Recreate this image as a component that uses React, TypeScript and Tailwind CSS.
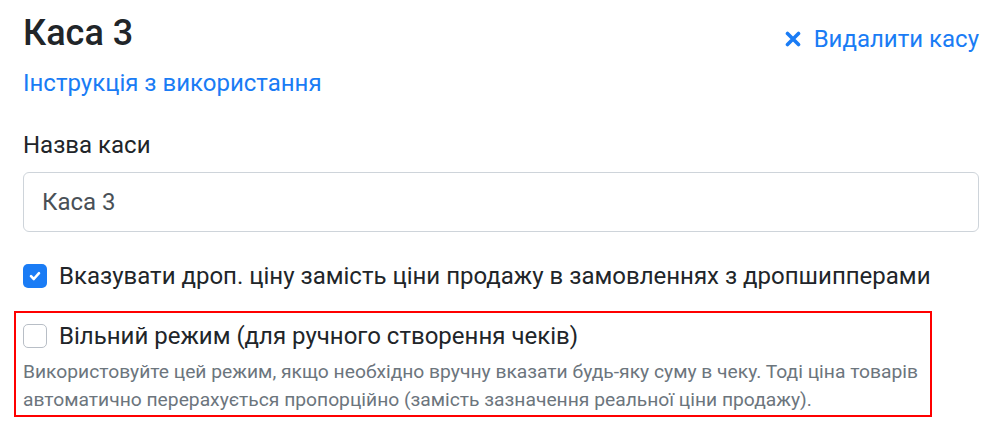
import React from "react";

export default function App() {
  return (
    <div className="w-[1002px] h-[435px] bg-white overflow-hidden px-[23px] pt-[12px] text-[#212529]" style={{ fontFamily: "Roboto, 'Noto Sans', sans-serif" }}>
      <div className="flex justify-between items-start">
        <h3 className="text-[36px] leading-[42px] font-medium">Каса 3</h3>
        <a className="flex items-center gap-[13px] text-[#1a7cf5] text-[24px] leading-[30px] mt-[12px]">
          <svg width="16" height="16" viewBox="0 0 16 16">
            <path d="M2.5 2.5 L13.5 13.5 M13.5 2.5 L2.5 13.5" stroke="#1a7cf5" strokeWidth="3.6" strokeLinecap="round" />
          </svg>
          <span>Видалити касу</span>
        </a>
      </div>
      <a className="block mt-[14px] text-[24px] leading-[30px] text-[#1a7cf5]">Інструкція з використання</a>
      <div className="mt-[32px] text-[24px] leading-[30px]">Назва каси</div>
      <div className="mt-[12px] h-[60px] border border-[#ced4da] rounded-[6px] flex items-center px-[18px] text-[24px] text-[#495057]">Каса 3</div>
      <label className="mt-[29px] flex items-center gap-[12px] text-[24px] leading-[30px]">
        <span className="w-[24px] h-[24px] rounded-[5px] bg-[#1a7cf5] flex items-center justify-center">
          <svg width="14" height="14" viewBox="0 0 14 14">
            <path d="M3 7.2 L5.8 10 L11 4.2" stroke="white" strokeWidth="2.6" fill="none" strokeLinecap="round" strokeLinejoin="round" />
          </svg>
        </span>
        <span>Вказувати дроп. ціну замість ціни продажу в замовленнях з дропшипперами</span>
      </label>
      <div className="mt-[20px] -ml-[9px] w-[918px] h-[106px] border-2 border-[#ff0000] pl-[7px] pt-[8px]">
        <label className="flex items-center gap-[12px] text-[24px] leading-[30px]">
          <span className="w-[24px] h-[24px] rounded-[5px] border border-[#b8bec6] bg-white" />
          <span>Вільний режим (для ручного створення чеків)</span>
        </label>
        <p className="mt-[7px] text-[19.25px] leading-[28px] text-[#6c757d]">
          Використовуйте цей режим, якщо необхідно вручну вказати будь-яку суму в чеку. Тоді ціна товарів автоматично перерахується пропорційно (замість зазначення реальної ціни продажу).
        </p>
      </div>
    </div>
  );
}
